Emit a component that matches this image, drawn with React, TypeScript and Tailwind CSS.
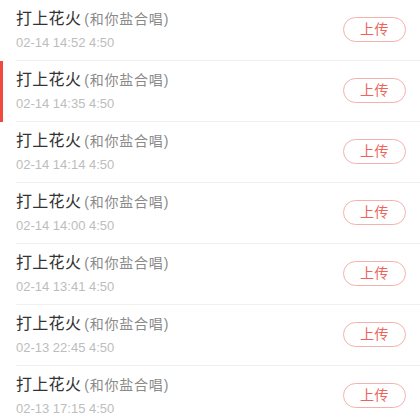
import React from "react";

const rows = [
  "02-14 14:52 4:50",
  "02-14 14:35 4:50",
  "02-14 14:14 4:50",
  "02-14 14:00 4:50",
  "02-14 13:41 4:50",
  "02-13 22:45 4:50",
  "02-13 17:15 4:50",
];

export default function App() {
  return (
    <div
      className="w-[420px] h-[420px] overflow-hidden bg-white"
      style={{ fontFamily: '"Liberation Sans", "Noto Sans CJK SC", sans-serif' }}
    >
      {rows.map((t, i) => (
        <div key={i} className="relative flex h-[61px]">
          {i === 1 && <div className="absolute left-0 top-0 h-[61px] w-[3px] bg-[#f04a3e]" />}
          <div className="ml-4 flex flex-1 items-center border-b border-[#f0f0f0] pb-[1px]">
            <div className="flex flex-1 flex-col">
              <div className="flex items-baseline leading-[22px]">
                <span className="text-[16px] tracking-[0.3px] text-[#333333]">打上花火</span>
                <span className="ml-[3px] text-[14px] tracking-[0.8px] text-[#8a8a8a]">(和你盐合唱)</span>
              </div>
              <div className="mt-[5px] text-[13px] leading-[16px] text-[#bdbdbd]">{t}</div>
            </div>
            <div className="mr-[14px] flex h-[25px] w-[63px] items-center justify-center rounded-full border border-[#f4b2ad] text-[14px] tracking-[0.5px] text-[#ec6459]">
              上传
            </div>
          </div>
        </div>
      ))}
    </div>
  );
}
